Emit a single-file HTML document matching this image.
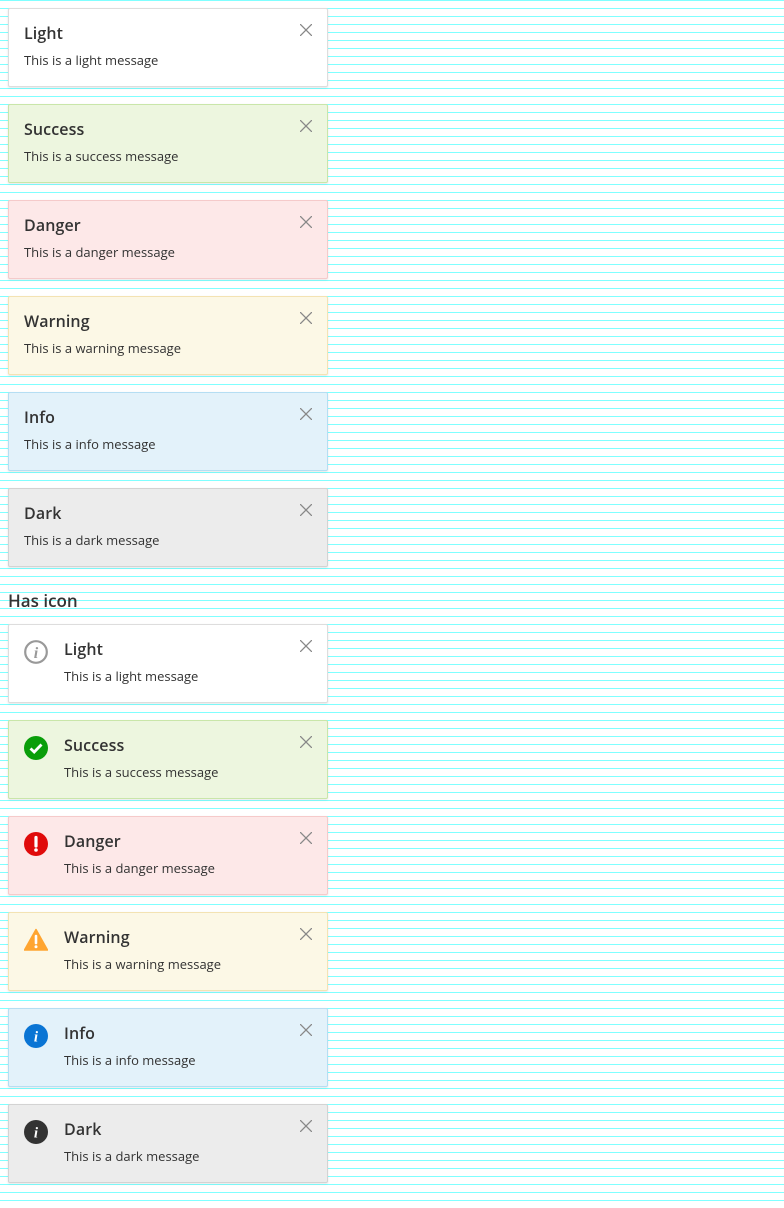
<!DOCTYPE html>
<html><head><style>
html,body{margin:0;padding:0}
body{width:784px;height:1208px;overflow:hidden;position:relative;font-family:"Open Sans","Liberation Sans",sans-serif;color:#333;
background:repeating-linear-gradient(to bottom,#80ffff 0,#80ffff 1px,#fff 1px,#fff 8px);}
.a{position:absolute;left:8px;width:318px;height:77px;border:1px solid #ddd;border-radius:2px;background:#fff;box-shadow:0 1px 2px rgba(0,0,0,.1)}
.a .t{position:absolute;left:15px;top:13px;font-size:16px;font-weight:600;color:#333;letter-spacing:.1px}
.a .m{position:absolute;left:15px;top:42px;font-size:13px;color:#333}
.a.i .t,.a.i .m{left:55px}
.x{position:absolute;right:15px;top:15px;width:12px;height:12px}
.ic{position:absolute;left:15px;top:15px;width:24px;height:24px}
.s{background:#edf6df;border-color:#c9e6a9}
.d{background:#fde8e8;border-color:#f5caca}
.w{background:#fcf8e6;border-color:#f3e3b3}
.n{background:#e3f2fa;border-color:#b5def3}
.k{background:#ececec;border-color:#d3d3d3}
h3{position:absolute;left:8px;top:589px;margin:0;font-size:17px;font-weight:600;color:#333}
</style></head><body>
<div class="a" style="top:8px"><div class="t">Light</div><div class="m">This is a light message</div><svg class="x" viewBox="0 0 12 12"><path d="M0 0L12 12M12 0L0 12" stroke="#888" stroke-width="1.3"/></svg></div>
<div class="a s" style="top:104px"><div class="t">Success</div><div class="m">This is a success message</div><svg class="x" viewBox="0 0 12 12"><path d="M0 0L12 12M12 0L0 12" stroke="#888" stroke-width="1.3"/></svg></div>
<div class="a d" style="top:200px"><div class="t">Danger</div><div class="m">This is a danger message</div><svg class="x" viewBox="0 0 12 12"><path d="M0 0L12 12M12 0L0 12" stroke="#888" stroke-width="1.3"/></svg></div>
<div class="a w" style="top:296px"><div class="t">Warning</div><div class="m">This is a warning message</div><svg class="x" viewBox="0 0 12 12"><path d="M0 0L12 12M12 0L0 12" stroke="#888" stroke-width="1.3"/></svg></div>
<div class="a n" style="top:392px"><div class="t">Info</div><div class="m">This is a info message</div><svg class="x" viewBox="0 0 12 12"><path d="M0 0L12 12M12 0L0 12" stroke="#888" stroke-width="1.3"/></svg></div>
<div class="a k" style="top:488px"><div class="t">Dark</div><div class="m">This is a dark message</div><svg class="x" viewBox="0 0 12 12"><path d="M0 0L12 12M12 0L0 12" stroke="#888" stroke-width="1.3"/></svg></div>
<h3>Has icon</h3>
<div class="a i" style="top:624px"><svg class="ic" viewBox="0 0 24 24"><circle cx="12" cy="12" r="10.8" fill="none" stroke="#999" stroke-width="2.2"/><text x="12" y="18" text-anchor="middle" font-family="Liberation Serif" font-style="italic" font-weight="bold" font-size="16" fill="#999">i</text></svg><div class="t">Light</div><div class="m">This is a light message</div><svg class="x" viewBox="0 0 12 12"><path d="M0 0L12 12M12 0L0 12" stroke="#888" stroke-width="1.3"/></svg></div>
<div class="a i s" style="top:720px"><svg class="ic" viewBox="0 0 24 24"><circle cx="12" cy="12" r="12" fill="#0a9e0a"/><path d="M6.5 12.5L10.2 16L17.5 8.5" fill="none" stroke="#fff" stroke-width="2.8"/></svg><div class="t">Success</div><div class="m">This is a success message</div><svg class="x" viewBox="0 0 12 12"><path d="M0 0L12 12M12 0L0 12" stroke="#888" stroke-width="1.3"/></svg></div>
<div class="a i d" style="top:816px"><svg class="ic" viewBox="0 0 24 24"><circle cx="12" cy="12" r="12" fill="#e00b0b"/><path d="M12 5.5V14" stroke="#fff" stroke-width="3.2" stroke-linecap="round"/><circle cx="12" cy="18" r="1.8" fill="#fff"/></svg><div class="t">Danger</div><div class="m">This is a danger message</div><svg class="x" viewBox="0 0 12 12"><path d="M0 0L12 12M12 0L0 12" stroke="#888" stroke-width="1.3"/></svg></div>
<div class="a i w" style="top:912px"><svg class="ic" viewBox="0 0 24 24"><path d="M12 1.5L23.5 22H0.5Z" fill="#ffa530" stroke="#ffa530" stroke-width="1.5" stroke-linejoin="round"/><path d="M12 8V15" stroke="#fff" stroke-width="2.6" stroke-linecap="round"/><circle cx="12" cy="18.8" r="1.5" fill="#fff"/></svg><div class="t">Warning</div><div class="m">This is a warning message</div><svg class="x" viewBox="0 0 12 12"><path d="M0 0L12 12M12 0L0 12" stroke="#888" stroke-width="1.3"/></svg></div>
<div class="a i n" style="top:1008px"><svg class="ic" viewBox="0 0 24 24"><circle cx="12" cy="12" r="12" fill="#0a75d4"/><text x="12" y="17.5" text-anchor="middle" font-family="Liberation Serif" font-style="italic" font-weight="bold" font-size="15" fill="#fff">i</text></svg><div class="t">Info</div><div class="m">This is a info message</div><svg class="x" viewBox="0 0 12 12"><path d="M0 0L12 12M12 0L0 12" stroke="#888" stroke-width="1.3"/></svg></div>
<div class="a i k" style="top:1104px"><svg class="ic" viewBox="0 0 24 24"><circle cx="12" cy="12" r="12" fill="#333"/><text x="12" y="17.5" text-anchor="middle" font-family="Liberation Serif" font-style="italic" font-weight="bold" font-size="15" fill="#fff">i</text></svg><div class="t">Dark</div><div class="m">This is a dark message</div><svg class="x" viewBox="0 0 12 12"><path d="M0 0L12 12M12 0L0 12" stroke="#888" stroke-width="1.3"/></svg></div>
</body></html>
